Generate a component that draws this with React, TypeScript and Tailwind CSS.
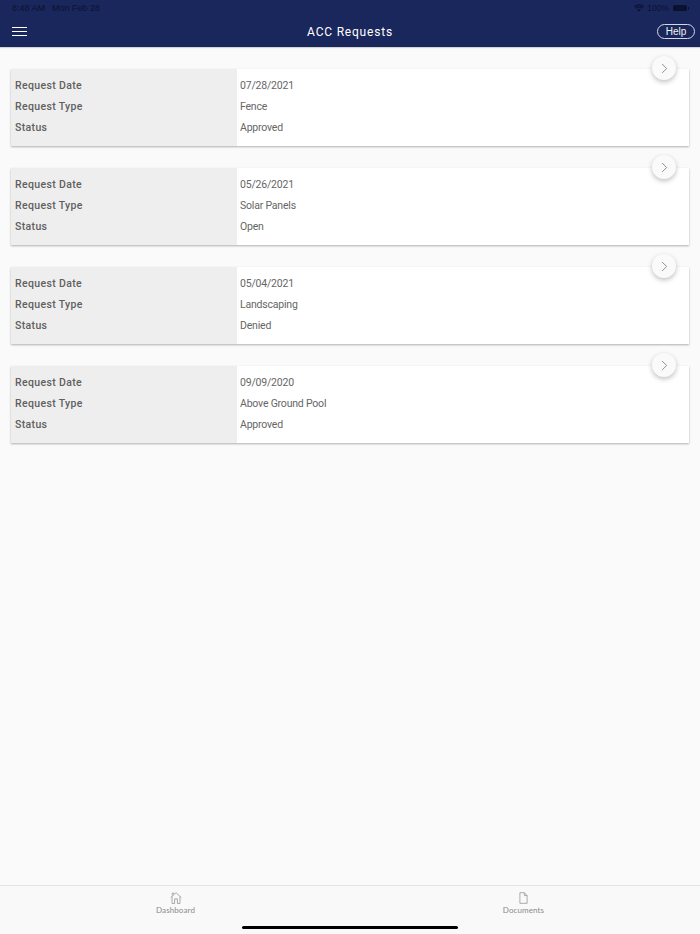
import React from "react";
import { ChevronRight } from "lucide-react";

const requests = [
  { date: "07/28/2021", type: "Fence", status: "Approved" },
  { date: "05/26/2021", type: "Solar Panels", status: "Open" },
  { date: "05/04/2021", type: "Landscaping", status: "Denied" },
  { date: "09/09/2020", type: "Above Ground Pool", status: "Approved" },
];

function StatusBar() {
  return (
    <div className="flex h-4 items-center justify-between pl-3 pr-[11px] font-['Liberation_Sans',sans-serif] text-[9px] leading-none text-[#0b1230]">
      <div className="flex gap-[7px]">
        <span>8:48 AM</span>
        <span>Mon Feb 28</span>
      </div>
      <div className="flex items-center gap-[3px] text-[8.5px]">
        <svg width="10" height="8" viewBox="0 0 20 15" fill="#0b1230">
          <path d="M10 15 L6.6 11.2 A5 5 0 0 1 13.4 11.2 Z" />
          <path d="M4.7 9.1 L3 7.2 A10 10 0 0 1 17 7.2 L15.3 9.1 A7.6 7.6 0 0 0 4.7 9.1 Z" />
          <path d="M1.8 5.9 L0 4 A14 14 0 0 1 20 4 L18.2 5.9 A11.5 11.5 0 0 0 1.8 5.9 Z" />
        </svg>
        <span>100%</span>
        <div className="ml-[1px] h-[6px] w-[14px] rounded-[1.5px] bg-[#0b1230]" />
        <div className="-ml-[2px] h-[3px] w-[1px] bg-[#0b1230]" />
      </div>
    </div>
  );
}

function Header() {
  return (
    <header className="h-[47px] bg-[#1a275c] shadow-[0_1px_1px_rgba(0,0,0,0.15)]">
      <StatusBar />
      <div className="relative flex h-[31px] items-center justify-between pl-3 pr-[5px]">
        <div className="flex w-[15px] flex-col gap-[3px]">
          <div className="h-[1px] bg-white" />
          <div className="h-[1px] bg-white" />
          <div className="h-[1px] bg-white" />
        </div>
        <h1 className="absolute inset-x-0 text-center text-[12px] font-normal tracking-[0.8px] text-white">ACC Requests</h1>
        <button className="relative flex h-[15px] w-[38px] items-center justify-center rounded-full border border-[#d5d8e2] font-['Liberation_Sans',sans-serif] text-[10px] leading-none text-[#f2f2f2]">
          Help
        </button>
      </div>
    </header>
  );
}

function Row({ value, label }: { value: string; label: string }) {
  return (
    <div className="flex h-[21px] items-center text-[10.5px]">
      <div className="w-[226px] pl-1 font-medium tracking-[0.35px] text-[#5f5f5f]">{label}</div>
      <div className="pl-[3px] tracking-[-0.2px] text-[#666666]">{value}</div>
    </div>
  );
}

function RequestCard({ date, type, status }: { date: string; type: string; status: string }) {
  return (
    <div className="relative h-[77px] bg-white shadow-[0_1px_2px_rgba(0,0,0,0.3)]">
      <div className="absolute inset-y-0 left-0 w-[226px] bg-[#eeeeee]" />
      <div className="relative pt-[6px]">
        <Row label="Request Date" value={date} />
        <Row label="Request Type" value={type} />
        <Row label="Status" value={status} />
      </div>
      <button className="absolute -top-[13px] right-[13px] flex h-[24px] w-[24px] items-center justify-center rounded-full bg-[#fafafa] shadow-[0_2px_5px_rgba(0,0,0,0.25)]">
        <ChevronRight size={17} strokeWidth={1} className="text-[#666666]" />
      </button>
    </div>
  );
}

function TabBar() {
  return (
    <footer className="relative h-[49px] border-t border-[#e4e4e4] bg-[#f9f9f9] font-['Lato',sans-serif]">
      <div className="flex">
        <div className="flex w-[351px] flex-col items-center pt-[6px]">
          <svg width="12" height="12" viewBox="0 0 13 13" fill="none" stroke="#8e8e8e" strokeWidth="0.8">
            <path d="M0.8 6 L6.5 0.8 L12.2 6" />
            <path d="M2.2 5 V12.4 H5 V7.4 H8 V12.4 H10.8 V5" />
            <path d="M2.4 3.8 V1.2 H4 V2.4" />
          </svg>
          <span className="mt-[1px] text-[8px] leading-[10px] tracking-[0.1px] text-[#8a8a8a]">Dashboard</span>
        </div>
        <div className="flex w-[345px] flex-col items-center pt-[6px]">
          <svg width="9" height="12" viewBox="0 0 10 13" fill="none" stroke="#8e8e8e" strokeWidth="0.8">
            <path d="M1 0.6 H6 L9 3.8 V12.4 H1 Z" />
            <path d="M6 0.6 V3.8 H9" />
          </svg>
          <span className="mt-[1px] text-[8px] leading-[10px] tracking-[0.1px] text-[#8a8a8a]">Documents</span>
        </div>
      </div>
      <div className="absolute bottom-[5px] left-[242px] h-[3px] w-[216px] rounded-full bg-black" />
    </footer>
  );
}

export default function App() {
  return (
    <div className="flex h-[934px] w-[700px] flex-col overflow-hidden bg-[#fafafa] font-['Roboto','Liberation_Sans',sans-serif]">
      <Header />
      <main className="flex flex-1 flex-col gap-[22px] px-[11px] pt-[22px]">
        {requests.map((r) => (
          <RequestCard key={r.date} {...r} />
        ))}
      </main>
      <TabBar />
    </div>
  );
}
